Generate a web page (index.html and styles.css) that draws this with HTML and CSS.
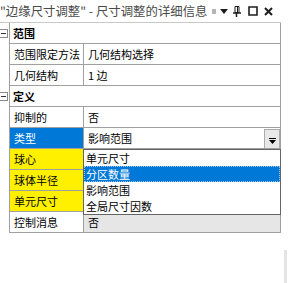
FILE: index.html
```html
<!DOCTYPE html>
<html>
<head>
<meta charset="utf-8">
<link rel="stylesheet" href="styles.css">
</head>
<body>
<div class="panel">
  <div class="titlebar">
    <span class="title">"边缘尺寸调整" - 尺寸调整的详细信息</span>
    <span class="grip"></span>
    <svg class="ic ic-down" width="8" height="5" viewBox="0 0 8 5"><path d="M0 0H8L4 5Z" fill="#1e1e1e"/></svg>
    <svg class="ic ic-pin" width="8" height="11" viewBox="0 0 8 11"><path d="M2 0.5H6V6.5H2Z" fill="none" stroke="#1e1e1e"/><path d="M4.5 1V6" stroke="#1e1e1e"/><path d="M0 7H8" stroke="#1e1e1e" stroke-width="1.5"/><path d="M3.5 7V11" stroke="#1e1e1e" stroke-width="1.5"/></svg>
    <svg class="ic ic-max" width="10" height="10" viewBox="0 0 10 10"><path d="M1 1H9V9H1Z" fill="none" stroke="#1e1e1e" stroke-width="1.6"/></svg>
    <svg class="ic ic-close" width="9" height="9" viewBox="0 0 9 9"><path d="M1 1L8 8M8 1L1 8" stroke="#1e1e1e" stroke-width="2"/></svg>
  </div>
  <div class="grid">
    <div class="cat"><span class="gutter"><span class="toggle"></span></span><span class="cat-label">范围</span></div>
    <div class="row"><span class="gutter"></span><div class="name">范围限定方法</div><div class="value">几何结构选择</div></div>
    <div class="row"><span class="gutter"></span><div class="name">几何结构</div><div class="value">1 边</div></div>
    <div class="cat"><span class="gutter"><span class="toggle"></span></span><span class="cat-label">定义</span></div>
    <div class="row"><span class="gutter"></span><div class="name">抑制的</div><div class="value">否</div></div>
    <div class="row"><span class="gutter"></span><div class="name selected">类型</div>
      <div class="value combo"><span>影响范围</span><span class="combo-btn"><svg width="7" height="6" viewBox="0 0 7 6"><path d="M0 0.5H7" stroke="#000"/><path d="M0 2H7L3.5 6Z" fill="#000"/></svg></span>
        <div class="dropdown">
          <div class="item">单元尺寸</div>
          <div class="item hl">分区数量</div>
          <div class="item">影响范围</div>
          <div class="item">全局尺寸因数</div>
        </div>
      </div>
    </div>
    <div class="row"><span class="gutter"></span><div class="name yellow">球心</div><div class="value"></div></div>
    <div class="row"><span class="gutter"></span><div class="name yellow">球体半径</div><div class="value"></div></div>
    <div class="row"><span class="gutter"></span><div class="name yellow">单元尺寸</div><div class="value"></div></div>
    <div class="row"><span class="gutter"></span><div class="name">控制消息</div><div class="value readonly">否</div></div>
  </div>
  <div class="scrollbit"></div>
</div>
</body>
</html>
```

FILE: styles.css
```css
html, body {
  margin: 0;
  padding: 0;
  background: #ffffff;
}
body {
  font-family: "Noto Sans CJK SC", "Noto Sans", sans-serif;
  font-size: 11px;
  color: #000;
  width: 288px;
  height: 283px;
  overflow: hidden;
}
.panel {
  position: relative;
  width: 288px;
  height: 283px;
}
.titlebar {
  height: 22px;
  display: flex;
  align-items: center;
  width: 281px;
  padding-right: 8px;
  box-sizing: border-box;
}
.title {
  margin-left: 0;
  font-size: 12.4px;
  color: #4a4a4a;
  white-space: nowrap;
}
.grip {
  width: 4px;
  height: 5px;
  margin-left: auto;
  background-image: radial-gradient(circle, #b0b0b0 0.7px, transparent 0.8px);
  background-size: 2px 2px;
}
.ic { display: block; flex: none; }
.ic-down { margin-left: 4px; }
.ic-pin { margin-left: 5px; }
.ic-max { margin-left: 7px; }
.ic-close { margin-left: 6px; }

.grid {
  width: 281px;
  border-top: 1px solid #c8c8c8;
}
.row, .cat {
  display: flex;
  height: 21px;
}
.gutter {
  width: 9px;
  flex: none;
  border-right: 1px solid #a0a0a0;
  position: relative;
}
.toggle {
  position: absolute;
  left: -1px;
  top: 6px;
  width: 7px;
  height: 7px;
  border: 1px solid #8a8a8a;
  background: #fff;
}
.toggle::after {
  content: "";
  position: absolute;
  left: 1px;
  top: 3px;
  width: 5px;
  height: 1px;
  background: #333;
}
.cat-label {
  flex: 1;
  font-weight: bold;
  padding-left: 3px;
  line-height: 20px;
  border-bottom: 1px solid #a0a0a0;
  border-right: 1px solid #a0a0a0;
}
.name {
  width: 69px;
  flex: none;
  padding-left: 4px;
  line-height: 20px;
  border-right: 1px solid #a0a0a0;
  border-bottom: 1px solid #a0a0a0;
  white-space: nowrap;
  overflow: hidden;
}
.value {
  flex: 1;
  padding-left: 4px;
  line-height: 20px;
  border-right: 1px solid #a0a0a0;
  border-bottom: 1px solid #a0a0a0;
  white-space: nowrap;
}
.selected {
  background: #0078d7;
  color: #fff;
}
.yellow {
  background: #fff000;
}
.readonly {
  background: #e6e6e6;
}
.combo {
  position: relative;
  display: flex;
  justify-content: space-between;
  padding-right: 0;
}
.combo-btn {
  width: 14px;
  height: 18px;
  margin-top: 1px;
  border: 1px solid #acacac;
  border-bottom: none;
  background: #e8e8e8;
  display: flex;
  align-items: center;
  justify-content: center;
}
.combo-btn svg { display: block; margin-top: 4px; }
.dropdown {
  position: absolute;
  top: calc(100% + 1px);
  left: -1px;
  right: -1px;
  background: #fff;
  border: 1px solid #646464;
  z-index: 2;
}
.item {
  height: 16px;
  line-height: 16px;
  padding-left: 2px;
  box-sizing: border-box;
}
.item.hl {
  background: #0078d7;
  color: #fff;
  outline: 1px dotted #9fc4ec;
  outline-offset: -1px;
}
.scrollbit {
  position: absolute;
  left: 284px;
  top: 250px;
  width: 3px;
  height: 33px;
  background: #e4e4e4;
}
```
